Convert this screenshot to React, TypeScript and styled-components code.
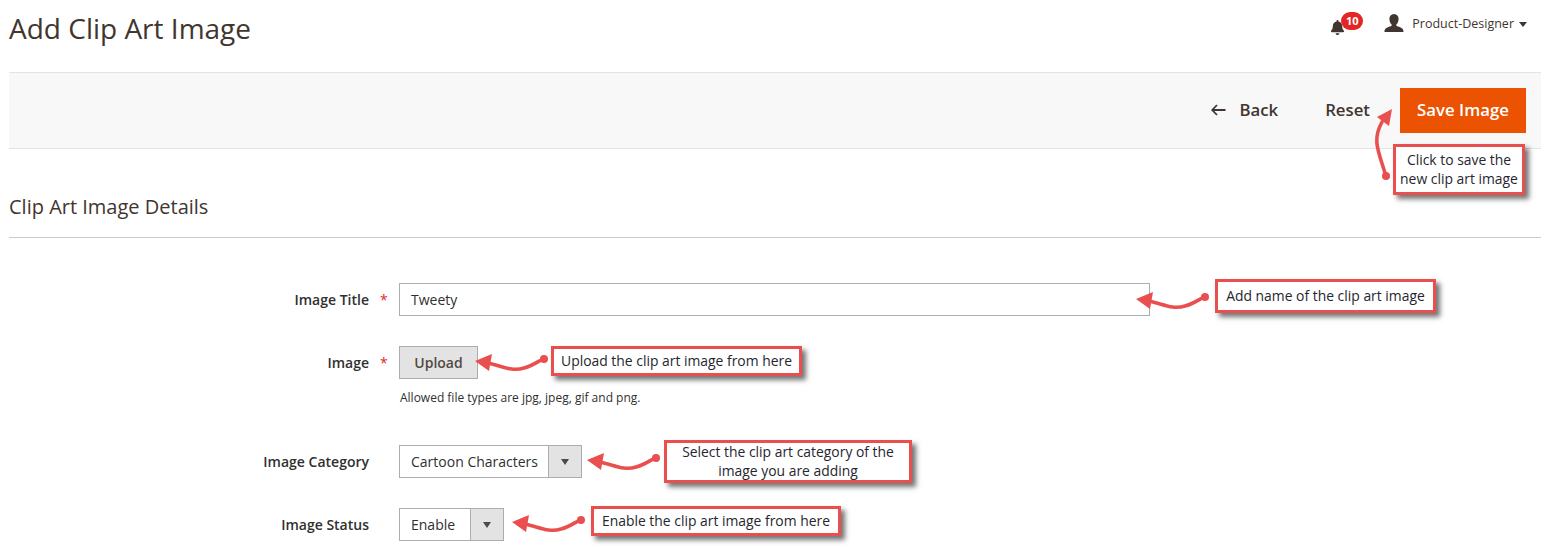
import { createGlobalStyle, styled } from 'styled-components';
import { FaBell } from 'react-icons/fa';

const FORM_LABEL_WIDTH = 360;
const ANNOTATION_RED = '#ea4f4f';

const GlobalStyle = createGlobalStyle`
  html, body {
    margin: 0;
    padding: 0;
    background: #fff;
    font-family: "Open Sans", "Liberation Sans", sans-serif;
    color: #41362f;
    overflow: hidden;
  }
`;

// small curved arrow used by the annotations, tip on the left
const PointerArrow = ({ x, y }: { x: number; y: number }) => (
  <ArrowSvg $x={x - 2} $y={y - 9} width="76" height="24" viewBox="0 0 76 24">
    <path d="M14 11 C28 14 38 20 50 16 C58 14 63 10 69 7" fill="none" stroke={ANNOTATION_RED} strokeWidth="3.6" strokeLinecap="round" />
    <polygon points="1,9 18,2 15,19" fill={ANNOTATION_RED} />
    <circle cx="70" cy="7" r="4" fill={ANNOTATION_RED} />
  </ArrowSvg>
);

const CALLOUTS = [
  { x: 1393, y: 144, w: 132, h: 51, text: 'Click to save the new clip art image' },
  { x: 1215, y: 279, w: 221, h: 34, text: 'Add name of the clip art image' },
  { x: 551, y: 346, w: 251, h: 30, text: 'Upload the clip art image from here' },
  { x: 664, y: 440, w: 248, h: 43, text: 'Select the clip art category of the image you are adding' },
  { x: 591, y: 506, w: 250, h: 30, text: 'Enable the clip art image from here' },
];

const ARROWS = [
  { x: 1137, y: 299 },
  { x: 476, y: 361 },
  { x: 588, y: 460 },
  { x: 513, y: 522 },
];

function App() {
  return (
    <Page>
      <GlobalStyle />

      <TopBar>
        <PageTitle>Add Clip Art Image</PageTitle>
        <TopActions>
          <BellWrap>
            <FaBell size={15} color="#41362f" />
            <Badge>10</Badge>
          </BellWrap>
          <UserMenu>
            <svg width="20" height="18" viewBox="0 0 20 18">
              <path
                d="M10 0 C13 0 14.6 2.2 14.6 5 C14.6 7.6 13.4 9.6 12.2 10.8 C12.2 11.6 12.6 12 14 12.6 C17 13.6 19.5 14.2 19.5 18 L0.5 18 C0.5 14.2 3 13.6 6 12.6 C7.4 12 7.8 11.6 7.8 10.8 C6.6 9.6 5.4 7.6 5.4 5 C5.4 2.2 7 0 10 0 Z"
                fill="#41362f"
              />
            </svg>
            <UserName>Product-Designer</UserName>
            <Caret />
          </UserMenu>
        </TopActions>
      </TopBar>

      <ActionBar>
        <BackLink>
          <svg width="15" height="12" viewBox="0 0 15 12">
            <path d="M6 1 L1.2 6 L6 11 M1.5 6 L14.5 6" fill="none" stroke="#41362f" strokeWidth="1.8" />
          </svg>
          Back
        </BackLink>
        <ResetLink>Reset</ResetLink>
        <SaveButton>Save Image</SaveButton>
      </ActionBar>

      <SectionTitle>Clip Art Image Details</SectionTitle>

      <Form>
        <FormRow $top={45}>
          <FieldLabel $required>Image Title</FieldLabel>
          <TextInput>Tweety</TextInput>
        </FormRow>

        <FormRow $top={30}>
          <FieldLabel $required>Image</FieldLabel>
          <UploadButton>Upload</UploadButton>
        </FormRow>
        <Hint>Allowed file types are jpg, jpeg, gif and png.</Hint>

        <FormRow $top={39}>
          <FieldLabel>Image Category</FieldLabel>
          <Select>
            <SelectValue $width={149}>Cartoon Characters</SelectValue>
            <SelectArrow />
          </Select>
        </FormRow>

        <FormRow $top={30}>
          <FieldLabel>Image Status</FieldLabel>
          <Select>
            <SelectValue $width={71}>Enable</SelectValue>
            <SelectArrow />
          </Select>
        </FormRow>
      </Form>

      {ARROWS.map((arrow) => (
        <PointerArrow key={arrow.x} x={arrow.x} y={arrow.y} />
      ))}

      <ArrowSvg $x={1370} $y={106} width="30" height="74" viewBox="0 0 30 74">
        <path d="M12 16 C2 34 8 44 16 70" fill="none" stroke={ANNOTATION_RED} strokeWidth="3.6" strokeLinecap="round" />
        <polygon points="22,3 7,11 19,20" fill={ANNOTATION_RED} />
        <circle cx="16" cy="70" r="4" fill={ANNOTATION_RED} />
      </ArrowSvg>

      {CALLOUTS.map((callout) => (
        <Callout key={callout.x} $x={callout.x} $y={callout.y} $w={callout.w} $h={callout.h}>
          {callout.text}
        </Callout>
      ))}
    </Page>
  );
}

export default App;


const Page = styled.div`
  position: relative;
  width: 1546px;
  height: 549px;
  padding: 0 5px 0 9px;
  box-sizing: border-box;
  overflow: hidden;
`;

const TopBar = styled.header`
  display: flex;
  justify-content: space-between;
  height: 72px;
`;

const PageTitle = styled.h1`
  margin: 9px 0 0;
  font-size: 28px;
  line-height: 38px;
  font-weight: 400;
  color: #41362f;
`;

const TopActions = styled.div`
  display: flex;
  align-items: flex-start;
  padding: 12px 14px 0 0;
`;

const BellWrap = styled.div`
  position: relative;
  width: 33px;
  height: 22px;
  padding-top: 6px;
  box-sizing: border-box;
  margin-right: 21px;
`;

const Badge = styled.span`
  position: absolute;
  left: 11px;
  top: 0;
  width: 22px;
  height: 18px;
  border-radius: 9px;
  background: #e22626;
  color: #fff;
  font-size: 11px;
  font-weight: 700;
  line-height: 18px;
  text-align: center;
`;

const UserMenu = styled.div`
  display: flex;
  align-items: center;
  height: 22px;
`;

const UserName = styled.span`
  margin-left: 8px;
  font-size: 12.5px;
  color: #41362f;
`;

const Caret = styled.span`
  margin-left: 5px;
  margin-top: 2px;
  width: 0;
  height: 0;
  border-left: 4px solid transparent;
  border-right: 4px solid transparent;
  border-top: 5px solid #41362f;
`;

const ActionBar = styled.div`
  display: flex;
  align-items: center;
  justify-content: flex-end;
  height: 77px;
  box-sizing: border-box;
  padding-right: 15px;
  background: #f8f8f8;
  border-top: 1px solid #e3e3e3;
  border-bottom: 1px solid #e3e3e3;
`;

const BackLink = styled.span`
  display: flex;
  align-items: center;
  column-gap: 13px;
  padding-bottom: 2px;
  font-size: 16.8px;
  font-weight: 600;
  color: #41362f;
`;

const ResetLink = styled.span`
  margin-left: 47px;
  padding-bottom: 2px;
  font-size: 16.8px;
  font-weight: 600;
  color: #41362f;
`;

const SaveButton = styled.button`
  margin-left: 30px;
  width: 126px;
  height: 45px;
  padding: 0 0 2px;
  border: none;
  background: #eb5202;
  color: #fff;
  font-family: inherit;
  font-size: 16.8px;
  font-weight: 600;
`;

const SectionTitle = styled.h2`
  margin: 0;
  height: 89px;
  box-sizing: border-box;
  padding-top: 44px;
  font-size: 20px;
  line-height: 27px;
  font-weight: 400;
  color: #41362f;
  border-bottom: 1px solid #cccccc;
`;

const Form = styled.div`
  display: flex;
  flex-direction: column;
`;

const FormRow = styled.div<{ $top: number }>`
  display: grid;
  grid-template-columns: ${FORM_LABEL_WIDTH}px auto;
  column-gap: 30px;
  justify-content: start;
  align-items: center;
  margin-top: ${(props) => props.$top}px;
`;

const FieldLabel = styled.label<{ $required?: boolean }>`
  position: relative;
  text-align: right;
  font-size: 14px;
  font-weight: 600;
  color: #303030;

  ${(props) =>
    props.$required &&
    `&::after {
      content: '*';
      position: absolute;
      left: calc(100% + 11px);
      top: 0;
      color: #e22626;
      font-weight: 400;
    }`}
`;

const TextInput = styled.div`
  width: 751px;
  height: 33px;
  box-sizing: border-box;
  padding-left: 11px;
  border: 1px solid #adadad;
  background: #fff;
  font-size: 14px;
  line-height: 31px;
  color: #303030;
`;

const UploadButton = styled.button`
  width: 79px;
  height: 33px;
  padding: 0;
  border: 1px solid #adadad;
  background: #e3e3e3;
  color: #514943;
  font-family: inherit;
  font-size: 14px;
  font-weight: 600;
`;

const Hint = styled.div`
  margin: 11px 0 0 391px;
  font-size: 12px;
  line-height: 16px;
  color: #303030;
`;

const Select = styled.div`
  display: inline-flex;
  height: 33px;
  box-sizing: border-box;
  border: 1px solid #adadad;
  background: #fff;
  justify-self: start;
`;

const SelectValue = styled.span<{ $width: number }>`
  width: ${(props) => props.$width - 1}px;
  box-sizing: border-box;
  padding-left: 11px;
  font-size: 14px;
  line-height: 31px;
  color: #303030;
  white-space: nowrap;
`;

const SelectArrow = styled.span`
  display: flex;
  align-items: center;
  justify-content: center;
  width: 32px;
  border-left: 1px solid #adadad;
  background: #e3e3e3;

  &::after {
    content: '';
    border-left: 4px solid transparent;
    border-right: 4px solid transparent;
    border-top: 6px solid #514943;
  }
`;

const ArrowSvg = styled.svg<{ $x: number; $y: number }>`
  position: absolute;
  left: ${(props) => props.$x}px;
  top: ${(props) => props.$y}px;
`;

const Callout = styled.div<{ $x: number; $y: number; $w: number; $h: number }>`
  position: absolute;
  left: ${(props) => props.$x}px;
  top: ${(props) => props.$y}px;
  width: ${(props) => props.$w}px;
  height: ${(props) => props.$h}px;
  box-sizing: border-box;
  display: flex;
  align-items: center;
  justify-content: center;
  padding: 0 1px 2px;
  border: 3px solid ${ANNOTATION_RED};
  background: #fff;
  box-shadow: 4px 4px 5px rgba(0, 0, 0, 0.55);
  font-size: 13.9px;
  line-height: 19px;
  text-align: center;
  color: #26262e;
`;
